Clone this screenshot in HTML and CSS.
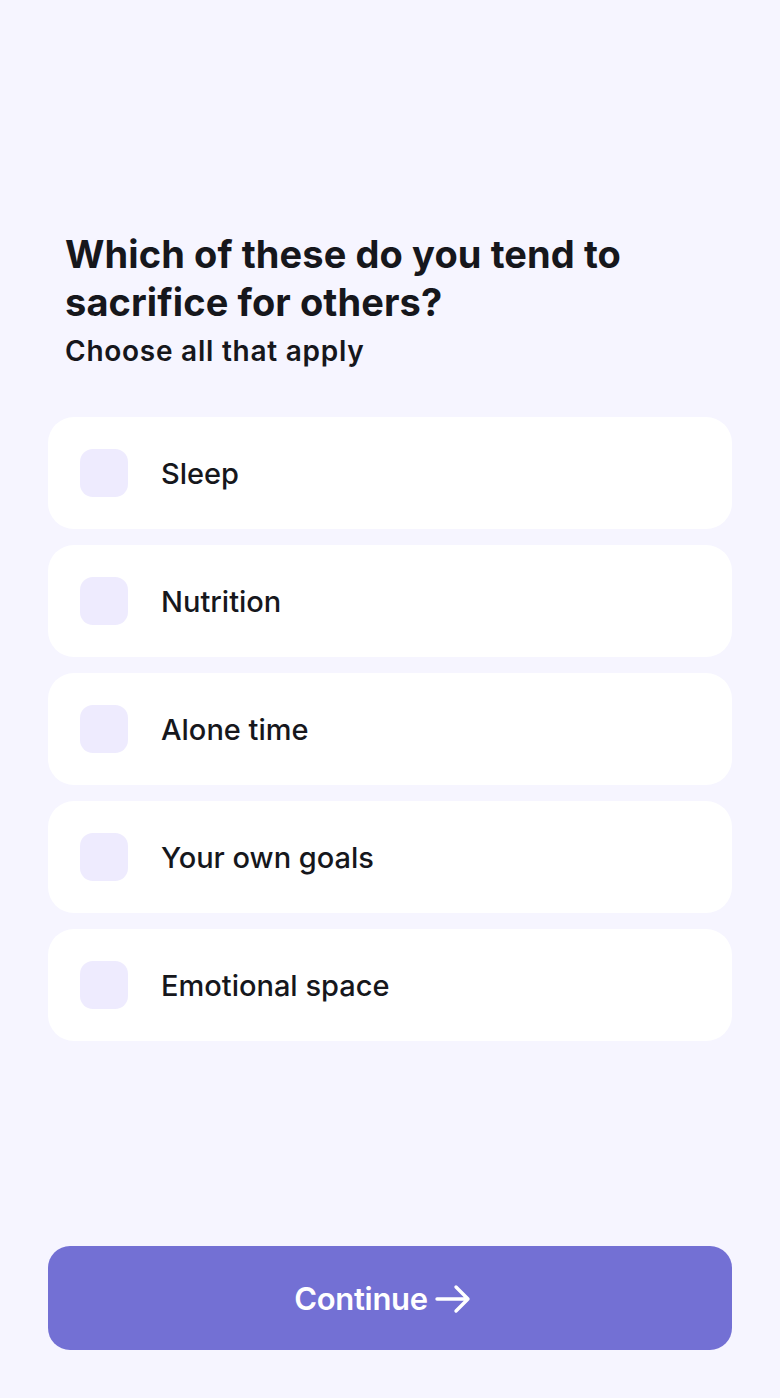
FILE: index.html
```html
<!DOCTYPE html>
<html>
<head>
<meta charset="utf-8">
<link rel="stylesheet" href="styles.css">
</head>
<body>
<main class="screen">
  <header class="head">
    <h1 class="title">Which of these do you tend to sacrifice for others?</h1>
    <p class="subtitle">Choose all that apply</p>
  </header>
  <ul class="options">
    <li class="option"><span class="box"></span><span class="label">Sleep</span></li>
    <li class="option"><span class="box"></span><span class="label">Nutrition</span></li>
    <li class="option"><span class="box"></span><span class="label">Alone time</span></li>
    <li class="option"><span class="box"></span><span class="label">Your own goals</span></li>
    <li class="option"><span class="box"></span><span class="label">Emotional space</span></li>
  </ul>
  <button class="continue">Continue
    <svg class="arrow" width="38" height="30" viewBox="0 0 38 30" fill="none" stroke="#fff" stroke-width="3.4" stroke-linecap="round" stroke-linejoin="round"><path d="M3 15 H34 M22 3 L34 15 L22 27"/></svg>
  </button>
</main>
</body>
</html>
```
FILE: styles.css
```css
* { box-sizing: border-box; }
html, body { margin: 0; padding: 0; }
body {
  background: #f6f5ff;
  font-family: Inter, "Noto Sans", sans-serif;
  color: #16171c;
}
.screen {
  min-height: 1398px;
  display: flex;
  flex-direction: column;
  padding: 230px 48px 48px;
}
.head { padding: 0 17px; }
.title {
  margin: 0;
  font-size: 38px;
  line-height: 48px;
  font-weight: 700;
  letter-spacing: 0.1px;
}
.subtitle {
  margin: 8px 0 0;
  font-size: 28px;
  line-height: 34px;
  font-weight: 600;
  letter-spacing: 0.75px;
}
.options {
  list-style: none;
  margin: 49px 0 0;
  padding: 0;
  display: flex;
  flex-direction: column;
  gap: 16px;
}
.option {
  height: 112px;
  background: #fff;
  border-radius: 26px;
  display: flex;
  align-items: center;
  padding: 0 32px;
  gap: 33px;
}
.box {
  width: 48px;
  height: 48px;
  border-radius: 13px;
  background: #eeebfe;
  flex: none;
}
.label {
  font-size: 29px;
  font-weight: 500;
}
.continue {
  margin-top: auto;
  height: 104px;
  border: none;
  border-radius: 22px;
  background: #7370d4;
  color: #fff;
  font-family: Inter, "Noto Sans", sans-serif;
  font-size: 31px;
  font-weight: 600;
  display: flex;
  align-items: center;
  justify-content: center;
  gap: 6px;
  padding: 0 14px 0 0;
  letter-spacing: -0.3px;
}
.arrow { margin-top: 2px; }
```
